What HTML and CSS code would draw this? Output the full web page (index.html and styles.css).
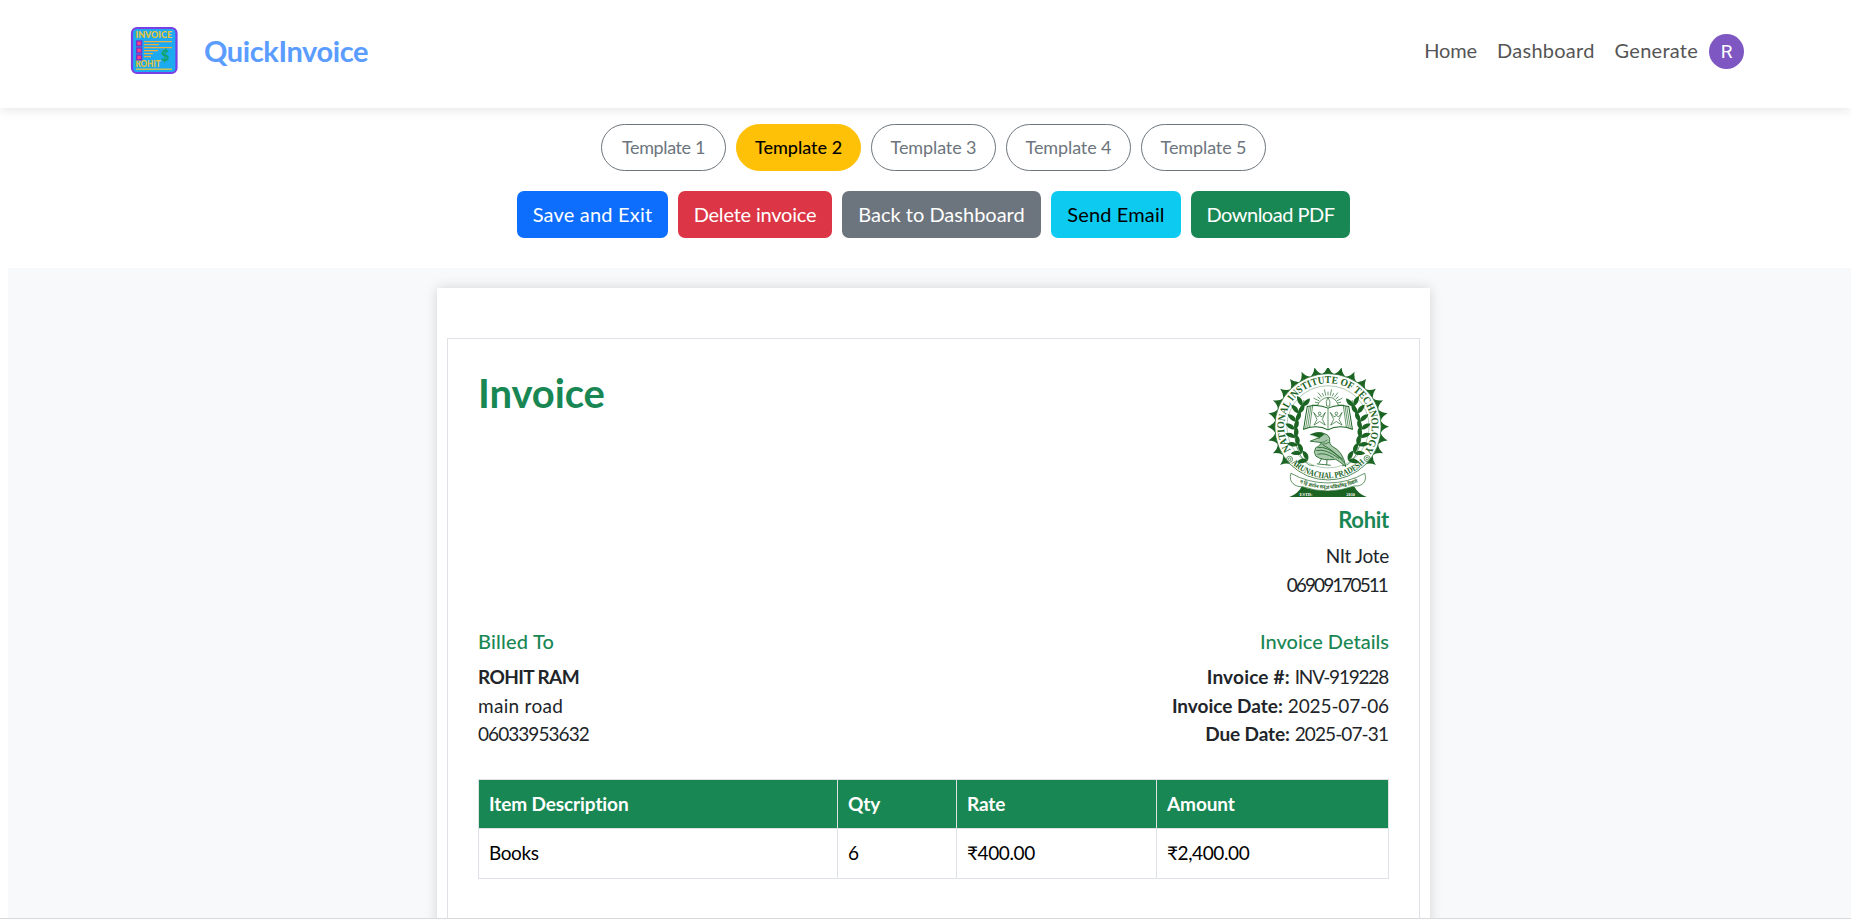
FILE: index.html
```html
<!DOCTYPE html>
<html lang="en">
<head>
<meta charset="utf-8">
<title>QuickInvoice</title>
<link rel="stylesheet" href="styles.css">
</head>
<body>
<div class="page">
  <nav class="navbar">
    <a class="brand">
      <svg class="brand-logo" viewBox="0 0 60 60">
        <rect x="8" y="8" width="44.5" height="45" rx="5" fill="#1eaaf1" stroke="#7a3fe4" stroke-width="2.2"/>
        <g fill="#e6c534" font-family="Lato, sans-serif" font-weight="900">
          <text x="11.5" y="18.3" font-size="8.8" textLength="36.5" lengthAdjust="spacingAndGlyphs">INVOICE</text>
          <text x="11.5" y="47.4" font-size="8.8" textLength="25" lengthAdjust="spacingAndGlyphs">ROHIT</text>
        </g>
        <g fill="#ff4081" stroke="#7a2fc8" stroke-width="1.4">
          <rect x="12.6" y="21" width="5" height="4.8"/><rect x="12.6" y="28" width="5" height="4.8"/><rect x="12.6" y="35" width="5" height="4.8"/>
        </g>
        <g stroke="#efb040" stroke-width="1.3">
          <path d="M20 21.7H48M20 24.6H35M20 27.6H48M20 30.6H34M20 33.6H29M20 36.7H27"/>
          <path d="M12 49.2H48" stroke="#c9c45a" stroke-width="1.6"/>
        </g>
        <text x="37" y="40.5" font-size="14.5" font-family="Lato, sans-serif" font-weight="900" fill="#0fa36b">$</text>
      </svg>
      <span class="brand-name">QuickInvoice</span>
    </a>
    <div class="nav-links">
      <a class="home">Home</a><a>Dashboard</a><a>Generate</a><span class="avatar">R</span>
    </div>
  </nav>

  <div class="templates">
    <button class="pill first">Template 1</button>
    <button class="pill active">Template 2</button>
    <button class="pill">Template 3</button>
    <button class="pill">Template 4</button>
    <button class="pill">Template 5</button>
  </div>
  <div class="actions">
    <button class="btn save">Save and Exit</button>
    <button class="btn delete">Delete invoice</button>
    <button class="btn back">Back to Dashboard</button>
    <button class="btn send">Send Email</button>
    <button class="btn download">Download PDF</button>
  </div>

  <main class="preview">
    <div class="sheet">
      <div class="invoice">
        <div class="head">
          <h1>Invoice</h1>
          <div class="company">
            <svg class="seal" viewBox="50 36 364 386">
              <defs>
                <path id="arcTop" d="M121 282A131 131 0 1 1 343 282"/>
                <path id="arcLow" d="M117 314A153 153 0 0 0 347 314"/>
                <path id="arcMotto" d="M143 378Q232 418 327 375"/>
                <path id="leaf" d="M0 0C-4 -11 2 -24 12 -31C18 -17 13 -5 0 0Z"/>
              </defs>
              <path id="spikes" fill="#1b6423"/>
              <circle cx="232" cy="212" r="159" fill="#fff" stroke="#1b6423" stroke-width="2"/>
              <circle cx="232" cy="212" r="123" fill="none" stroke="#1b6423" stroke-width="1"/>
              <path d="M116 422Q142 412 153 391H311Q322 412 348 422Z" fill="#1b6423"/>
              <path d="M121 351C112 379 136 393 155 391Q232 418 311 389C334 391 350 377 342 351Q292 380 232 380T121 351Z" fill="#fff" stroke="#1b6423" stroke-width="2"/>
              <g fill="#1b6423" font-family="Liberation Serif, serif" font-weight="700">
                <text font-size="31"><textPath href="#arcTop" textLength="562" lengthAdjust="spacingAndGlyphs">NATIONAL INSTITUTE OF TECHNOLOGY</textPath></text>
                <text font-size="26"><textPath href="#arcLow" textLength="245" startOffset="8" lengthAdjust="spacingAndGlyphs">ARUNACHAL PRADESH</textPath></text>
                <text font-size="15" font-family="Noto Sans, Noto Sans Devanagari, sans-serif"><textPath href="#arcMotto" textLength="180" startOffset="4" lengthAdjust="spacingAndGlyphs">न हि ज्ञानेन सदृशं पवित्रमिह विद्यते</textPath></text>
                <g fill="#fff" font-size="13"><text x="147" y="418">ESTD:</text><text x="287" y="418">2010</text></g>
              </g>
              <g fill="none" stroke="#1b6423" stroke-width="2">
                <circle cx="117" cy="309" r="9"/><circle cx="117" cy="309" r="4"/>
                <circle cx="349" cy="307" r="9"/><circle cx="349" cy="307" r="4"/>
              </g>
              <g id="leaves" fill="#1b6423"></g>
              <g fill="none" stroke="#1b6423">
                <path d="M160 132Q118 210 138 270T190 329M304 132Q346 210 326 270T274 329" stroke-width="2"/>
                <path id="rays" stroke-width="2"/>
                <path d="M200 149Q210 126 232 124T264 149" stroke-width="2"/>
                <path d="M232 124Q224 136 228 150H237Q241 136 232 124Z" fill="#fff" stroke-width="2"/>
                <path d="M170 151Q205 143 232 156Q258 143 294 151L305 219Q264 204 232 221Q200 204 159 219Z" fill="#fff" stroke-width="3"/>
                <path d="M232 156V221M176 151L165 216M181 150L171 215M186 149L177 213M288 151L299 216M283 150L293 215M278 149L287 213" stroke-width="2"/>
                <g stroke-width="2"><path d="M189 169L200 182Q207 175 214 182L224 169L215 190L224 207L207 196L190 207L199 190Z"/><circle cx="207" cy="172" r="4"/>
                <path d="M239 169L250 182Q257 175 264 182L274 169L265 190L274 207L257 196L240 207L249 190Z"/><circle cx="257" cy="172" r="4"/></g>
              </g>
              <g stroke="#1b6423" stroke-linecap="round" stroke-linejoin="round">
                <path d="M181 235Q205 224 223 233Q237 238 237 250Q235 265 246 271Q277 286 285 331Q262 313 255 309Q216 315 196 300Q187 289 195 275Q212 266 211 259L179 255Q199 246 207 245Q197 234 181 235Z" fill="#a9c8ab" stroke-width="2.5"/>
                <path d="M181 235Q205 224 221 234L207 245Z" fill="#1b6423"/>
                <path d="M202 274Q226 266 276 309M198 283Q225 276 264 306M202 294Q222 288 248 304M218 267Q246 280 280 319M212 309L205 321M229 311L228 325M200 323L239 327" fill="none" stroke-width="2.5"/>
                <path d="M211 259Q223 259 229 252M213 264Q228 264 236 258" fill="none" stroke-width="2"/>
              </g>
            </svg>
            <h2>Rohit</h2>
            <p class="jote">NIt Jote</p>
            <p class="phone">06909170511</p>
          </div>
        </div>
        <div class="details">
          <div>
            <h3 class="billed">Billed To</h3>
            <p><strong class="client">ROHIT RAM</strong></p>
            <p class="road">main road</p>
            <p class="client-phone">06033953632</p>
          </div>
          <div class="meta">
            <h3>Invoice Details</h3>
            <p><strong class="num">Invoice #:</strong> <span class="inv">INV-919228</span></p>
            <p><strong>Invoice Date:</strong> <span class="date">2025-07-06</span></p>
            <p><strong class="due-label">Due Date:</strong> <span class="due">2025-07-31</span></p>
          </div>
        </div>
        <table>
          <colgroup><col class="c1"><col class="c2"><col class="c3"><col class="c4"></colgroup>
          <thead><tr><th>Item Description</th><th>Qty</th><th>Rate</th><th>Amount</th></tr></thead>
          <tbody><tr><td>Books</td><td>6</td><td>₹400.00</td><td>₹2,400.00</td></tr></tbody>
        </table>
      </div>
    </div>
  </main>
</div>
<script src="seal.js"></script>
</body>
</html>
```
FILE: styles.css
```css
* { box-sizing: border-box; }
body { margin: 0; background: #fff; color: #212529; font-family: Lato, "Noto Sans", sans-serif; overflow: hidden; }
h1, h2, h3, p { margin: 0; }
.page { height: 919px; display: flex; flex-direction: column; overflow: hidden; border-bottom: 1px solid #d9dadb; }

.navbar { height: 108px; flex: none; padding: 0 107px 8px 124px; display: flex; align-items: center; justify-content: space-between; box-shadow: 0 2px 10px rgba(0,0,0,.1); }
.brand { display: flex; align-items: center; gap: 20px; }
.brand-logo { width: 60px; height: 60px; display: block; }
.brand-name { font-size: 29px; line-height: 36px; padding-top: 1px; font-weight: 700; letter-spacing: -.4px; color: #5a9cff; }
.nav-links { display: flex; align-items: center; font-size: 20px; line-height: 30px; color: #555; gap: 20px; letter-spacing: .25px; }
.home { letter-spacing: -.1px; }
.avatar { width: 35px; height: 35px; margin: 3px 0 0 -9px; border-radius: 50%; background: #7e57c2; color: #fff; font: 19px/35px Roboto, sans-serif; text-align: center; letter-spacing: 0; }

.templates, .actions { display: flex; justify-content: center; gap: 10px; padding-left: 16px; flex: none; }
.templates { margin-top: 16px; }
.actions { margin-top: 20px; }
button { font-family: inherit; height: 47px; padding: 0 0 2px; cursor: pointer; white-space: nowrap; }
.pill { width: 125px; border: 1px solid #6c757d; border-radius: 24px; background: #fff; color: #6c757d; font-size: 18px; letter-spacing: -.1px; }
.first { letter-spacing: -.4px; }
.active { background: #ffc107; border-color: #ffc107; color: #000; font-weight: 500; letter-spacing: 0; }
.btn { border: 0; border-radius: 7px; color: #fff; font-size: 20px; }
.save { width: 151px; background: #0d6efd; letter-spacing: .2px; }
.delete { width: 154px; background: #dc3545; letter-spacing: -.2px; }
.back { width: 199px; background: #6c757d; }
.send { width: 130px; background: #0dcaf0; color: #000; letter-spacing: .15px; }
.download { width: 159px; background: #198754; letter-spacing: -.5px; }

.preview { flex: 1; min-height: 0; margin: 30px 0 0 8px; padding: 20px 0 0 8px; background: #f8f9fa; display: flex; justify-content: center; }
.sheet { width: 993px; height: 1400px; padding: 50px 10px; background: #fff; box-shadow: 0 0 12px rgba(0,0,0,.15); }
.invoice { height: 1300px; padding: 29px 30px; border: 1px solid #dee2e6; }
.head, .details { display: flex; justify-content: space-between; }
h1, h2, h3 { color: #198754; }
h1 { font-size: 40px; line-height: 50px; font-weight: 700; letter-spacing: -.1px; }
.company, .meta { text-align: right; }
.seal { display: block; width: 122px; height: 129px; margin-left: auto; }
h2 { margin-top: 9px; font-size: 22px; line-height: 27px; font-weight: 700; letter-spacing: -.3px; }
.company .jote { margin-top: 9px; letter-spacing: -.3px; }
p { font-size: 19px; line-height: 28.5px; }
.phone { letter-spacing: -1.9px; padding-right: 2px; }
.details { margin-top: 30px; }
h3 { font-size: 20px; line-height: 24px; font-weight: 500; margin-bottom: 10px; }
.billed { letter-spacing: .2px; }
strong { font-weight: 700; }
.client { letter-spacing: -.6px; }
.road { letter-spacing: .3px; }
.client-phone { letter-spacing: -.95px; }
.num { letter-spacing: .2px; }
.inv { letter-spacing: -1.2px; margin-right: 1px; }
.date { letter-spacing: -.1px; }
.due { letter-spacing: -.9px; margin-right: 1px; }
.due-label { letter-spacing: -.1px; }

table { width: 911px; margin-top: 30px; border-collapse: collapse; table-layout: fixed; font-size: 19px; }
.c1 { width: 359px; } .c2 { width: 119px; } .c3 { width: 200px; } .c4 { width: 232px; }
th, td { height: 49.5px; padding: 0 10px; border: 1px solid #dee2e6; text-align: left; line-height: 28px; color: #000; }
th { background: #198754; color: #fff; font-weight: 700; letter-spacing: -.1px; }
td { letter-spacing: -.4px; }
```
FILE: seal.js
```js
const CX = 232, CY = 212;
const polar = (r, a) => [CX + r * Math.cos(a), CY + r * Math.sin(a)].map(v => v.toFixed(1)).join(" ");

// Outer ring of pointed teeth with concave sides, left out behind the ribbon
const teeth = 28, step = 2 * Math.PI / teeth;
let d = "M" + polar(159, -Math.PI / 2 - step / 2);
for (let i = 0; i < teeth; i++) {
  const a = -Math.PI / 2 + i * step;
  const hidden = Math.sin(a) > .75;
  const mid = hidden ? 159 : 164, tip = hidden ? 159 : 183;
  d += "Q" + polar(mid, a - step * .16) + " " + polar(tip, a);
  d += "Q" + polar(mid, a + step * .16) + " " + polar(159, a + step / 2);
}
document.getElementById("spikes").setAttribute("d", d + "Z");

// Sun rays above the book
let rays = "";
for (let i = 0; i <= 14; i++) {
  const a = Math.PI + i * Math.PI / 14;
  const p = r => (232 + r * Math.cos(a)).toFixed(1) + " " + (147 + r * Math.sin(a)).toFixed(1);
  rays += "M" + p(29) + "L" + p(i % 2 ? 40 : 48);
}
document.getElementById("rays").setAttribute("d", rays);

// Laurel branches: [x, y, tilt] along the left stem, mirrored to the right
const stem = [[154, 150, 5], [143, 172, -8], [136, 196, -18], [133, 220, -28], [135, 244, -38], [142, 268, -50], [154, 291, -60], [172, 312, -70]];
let leaves = "";
for (const [x, y, t] of stem) {
  const pair = `<use href="#leaf" transform="translate(${x} ${y}) rotate(${t + 20})"/><use href="#leaf" transform="translate(${x} ${y}) rotate(${t - 52})"/>`;
  leaves += pair + `<g transform="translate(464 0) scale(-1 1)">${pair}</g>`;
}
document.getElementById("leaves").innerHTML = leaves;
```
